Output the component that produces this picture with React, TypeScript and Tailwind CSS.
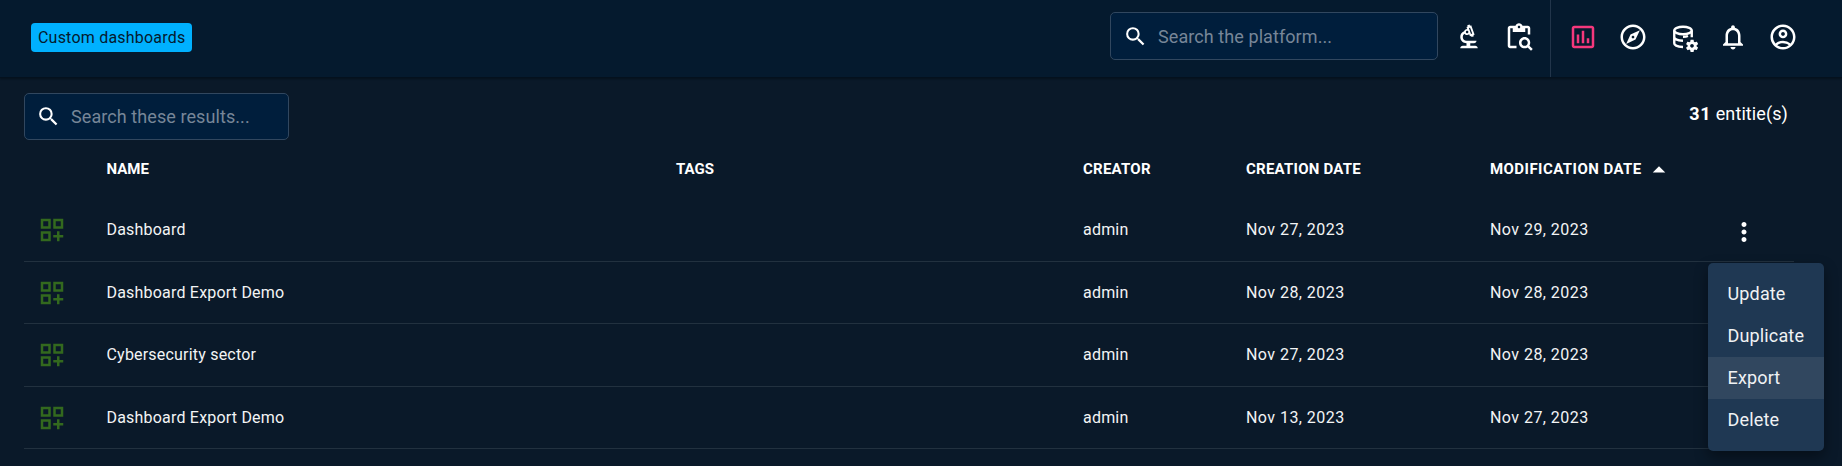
import React from "react";
import {
  MdMoreVert,
  MdNotificationsNone,
  MdOutlineAccountCircle,
  MdOutlineBiotech,
  MdOutlineDashboardCustomize,
  MdOutlineExplore,
  MdOutlineInsertChart,
  MdSearch,
  MdArrowDropUp,
  MdOutlineContentPasteSearch,
} from "react-icons/md";

type Row = { name: string; creator: string; created: string; modified: string };

const rows: Row[] = [
  { name: "Dashboard", creator: "admin", created: "Nov 27, 2023", modified: "Nov 29, 2023" },
  { name: "Dashboard Export Demo", creator: "admin", created: "Nov 28, 2023", modified: "Nov 28, 2023" },
  { name: "Cybersecurity sector", creator: "admin", created: "Nov 27, 2023", modified: "Nov 28, 2023" },
  { name: "Dashboard Export Demo", creator: "admin", created: "Nov 13, 2023", modified: "Nov 27, 2023" },
];

const menuItems = ["Update", "Duplicate", "Export", "Delete"];

function DatabaseCogIcon() {
  return (
    <svg viewBox="0 0 24 24" className="size-[30px]" fill="none">
      <g stroke="currentColor" strokeWidth="1.9">
        <ellipse cx="12" cy="6.8" rx="7" ry="3" />
        <path d="M5 6.8v10.2c0 1.6 2.9 2.9 7 3M19 6.8v5.4M5 12c0 1.6 2.8 2.9 7 3M16 11.2c-1 .4-2.300.6-4 .6" />
      </g>
      <path
        transform="translate(1.2 1)"
        fill="currentColor"
        fillRule="evenodd"
        d="M21.7 18.6V17.6L22.8 16.8C22.9 16.7 23 16.6 22.9 16.5L21.9 14.8C21.9 14.7 21.7 14.7 21.6 14.7L20.4 15.2C20.1 15 19.8 14.8 19.5 14.7L19.3 13.4C19.3 13.3 19.2 13.2 19.1 13.2H17.1C16.9 13.2 16.8 13.3 16.8 13.4L16.6 14.7C16.3 14.9 16.1 15 15.8 15.2L14.6 14.7C14.5 14.7 14.4 14.7 14.3 14.8L13.3 16.5C13.3 16.6 13.3 16.7 13.4 16.8L14.5 17.6V18.6L13.4 19.4C13.3 19.5 13.2 19.6 13.3 19.7L14.3 21.4C14.4 21.5 14.5 21.5 14.6 21.5L15.8 21C16 21.2 16.3 21.4 16.6 21.5L16.8 22.8C16.9 22.9 17 23 17.1 23H19.1C19.2 23 19.3 22.9 19.3 22.8L19.5 21.5C19.8 21.3 20 21.2 20.3 21L21.5 21.4C21.6 21.4 21.7 21.4 21.8 21.3L22.8 19.6C22.9 19.5 22.9 19.4 22.8 19.4L21.7 18.6M18 19.5C17.2 19.5 16.5 18.8 16.5 18S17.2 16.5 18 16.5 19.5 17.2 19.5 18 18.8 19.5 18 19.5"
      />
    </svg>
  );
}

function SearchBox({ label, className }: { label: string; className: string }) {
  return (
    <div className={`flex items-center rounded-[5px] border border-[#31475f] bg-[#001e3c] ${className}`}>
      <MdSearch className="size-[25px] text-white" />
      <span className="ml-[10px] text-[18px] tracking-[0.08px] text-[#778698]">{label}</span>
    </div>
  );
}

function Header() {
  return (
    <header className="flex h-[78px] items-start border-b border-[#04111e] bg-[#051a2e] shadow-[0_1px_2px_rgba(0,0,0,0.35)]">
      <div className="mt-[23px] ml-[31px] flex h-[29px] w-[161px] items-center rounded-[4px] bg-[#00b1ff] pl-[7px] text-[16px] tracking-[0.21px] text-[#051a2e]">
        Custom dashboards
      </div>
      <SearchBox label="Search the platform..." className="mt-3 ml-auto h-12 w-[328px] pl-3" />
      <div className="flex h-[77px] w-[112px] items-center pb-[3px] pl-4 text-white">
        <MdOutlineBiotech className="size-[30px]" />
        <MdOutlineContentPasteSearch className="ml-5 size-[30px]" />
      </div>
      <nav className="flex h-[77px] w-[292px] items-center gap-5 border-l border-[#22354a] pb-[3px] pl-[17px] text-white">
        <MdOutlineInsertChart className="size-[30px] text-[#f5387c]" />
        <MdOutlineExplore className="size-[30px]" />
        <DatabaseCogIcon />
        <MdNotificationsNone className="size-[30px]" />
        <MdOutlineAccountCircle className="size-[30px]" />
      </nav>
    </header>
  );
}

const columns = "grid grid-cols-[82.5px_569.5px_407px_163px_244px_1fr]";

function RowMenu() {
  return (
    <div className="absolute top-[263px] left-[1708px] h-[188px] w-[116px] rounded-[5px] bg-[#1f3853] py-[10px] shadow-[0_6px_14px_rgba(0,0,0,0.4)]">
      {menuItems.map((item) => (
        <div
          key={item}
          className={`flex h-[42px] items-center pb-[2px] pl-[19.5px] text-[18px] tracking-[0.15px] text-[#f0f2f4] ${item === "Export" ? "bg-[#31475f]" : ""}`}
        >
          {item}
        </div>
      ))}
    </div>
  );
}

export default function App() {
  return (
    <div className="relative h-[466px] w-[1842px] overflow-hidden bg-[#0a1929] font-[Roboto,sans-serif] text-white">
      <Header />
      <main className="px-6 pt-[15px]">
        <div className="flex h-12 justify-between">
          <SearchBox label="Search these results..." className="h-[47px] w-[265px] pl-[11px]" />
          <div className="mr-[30px] pt-[7px] text-[18px] leading-[27px] tracking-[0.1px]">
            <b className="tracking-[0.6px]">31</b> entitie(s)
          </div>
        </div>
        <div className={`${columns} h-[58px] pt-[17px] text-[15px] leading-[23px] font-bold tracking-[0.24px]`}>
          <span />
          <span className="tracking-normal">NAME</span>
          <span className="tracking-normal">TAGS</span>
          <span>CREATOR</span>
          <span>CREATION DATE</span>
          <span className="flex tracking-[0.45px]">
            MODIFICATION DATE
            <MdArrowDropUp className="-mt-[3px] ml-[2px] size-[30px]" />
          </span>
        </div>
        <div className="w-[1770px]">
          {rows.map((row, index) => (
            <div
              key={index}
              className={`${columns} h-[62.5px] items-center border-b border-[#22313f] pt-px text-[16px] leading-6 tracking-[0.2px] text-[#f3f4f5]`}
            >
              <MdOutlineDashboardCustomize className="ml-[13px] size-[30px] text-[#33691e]" />
              <span>{row.name}</span>
              <span />
              <span>{row.creator}</span>
              <span className="tracking-[0.45px]">{row.created}</span>
              <div className="flex h-6 items-center">
                <span className="w-[239px] tracking-[0.45px]">{row.modified}</span>
                {index === 0 && <MdMoreVert className="mt-1 size-[30px] shrink-0 text-white" />}
              </div>
            </div>
          ))}
        </div>
      </main>
      <RowMenu />
    </div>
  );
}
